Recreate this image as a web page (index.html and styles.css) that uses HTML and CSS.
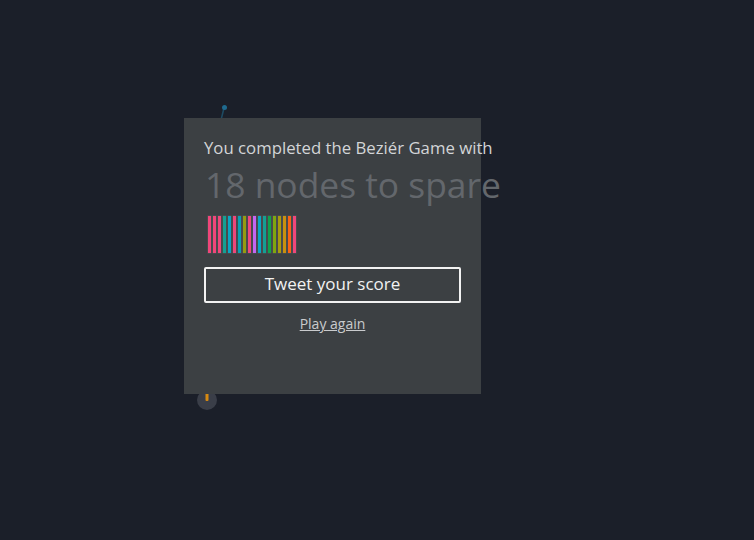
FILE: index.html
```html
<!DOCTYPE html>
<html>
<head>
<meta charset="utf-8">
<link rel="stylesheet" href="styles.css">
</head>
<body>
<div class="stage">
  <svg class="canvas" width="754" height="540" viewBox="0 0 754 540">
    <line x1="224" y1="108" x2="221" y2="120" stroke="#1d4a63" stroke-width="1.5"/>
    <circle cx="224.5" cy="107.5" r="2.5" fill="#1f6a8f"/>
    <circle cx="207" cy="400" r="10" fill="#3a3e48"/>
    <rect x="205.5" y="392" width="3" height="9" rx="1" fill="#d78a10"/>
  </svg>
  <div class="panel">
    <p class="intro">You completed the Beziér Game with</p>
    <p class="score">18 nodes to spare</p>
    <div class="bars">
      <span class="bar" style="background:#f0467a"></span>
      <span class="bar" style="background:#f0467a"></span>
      <span class="bar" style="background:#f0467a"></span>
      <span class="bar" style="background:#14a094"></span>
      <span class="bar" style="background:#0aa6c4"></span>
      <span class="bar" style="background:#f0467a"></span>
      <span class="bar" style="background:#0aa0b4"></span>
      <span class="bar" style="background:#949c10"></span>
      <span class="bar" style="background:#f0467a"></span>
      <span class="bar" style="background:#c465f2"></span>
      <span class="bar" style="background:#0aa6c4"></span>
      <span class="bar" style="background:#14a094"></span>
      <span class="bar" style="background:#10a24e"></span>
      <span class="bar" style="background:#80a60e"></span>
      <span class="bar" style="background:#a89a0e"></span>
      <span class="bar" style="background:#c8900e"></span>
      <span class="bar" style="background:#f86414"></span>
      <span class="bar" style="background:#f0467a"></span>
    </div>
    <button class="tweet">Tweet your score</button>
    <a class="again" href="#">Play again</a>
  </div>
</div>
</body>
</html>
```
FILE: styles.css
```css
html, body {
  margin: 0;
  padding: 0;
  background: #1b1f29;
  width: 754px;
  height: 540px;
  overflow: hidden;
}
.stage {
  position: relative;
  width: 754px;
  height: 540px;
  padding: 118px 0 0 184px;
  box-sizing: border-box;
  font-family: "Open Sans", "Noto Sans", sans-serif;
}
.canvas {
  position: absolute;
  left: 0;
  top: 0;
}
.panel {
  position: relative;
  width: 297px;
  height: 276px;
  box-sizing: border-box;
  background: #3c4043;
  padding: 18px 20px 0 20px;
  display: flex;
  flex-direction: column;
  align-items: flex-start;
}
.intro {
  margin: 0;
  font-size: 16.75px;
  line-height: 24px;
  color: #d3d5d7;
  white-space: nowrap;
}
.score {
  margin: 2px 0 0 1px;
  font-size: 35.4px;
  line-height: 44px;
  color: #63676c;
  white-space: nowrap;
}
.bars {
  display: flex;
  gap: 2px;
  margin: 10px 0 0 4px;
  height: 37px;
}
.bar {
  width: 3px;
  height: 37px;
  display: block;
  box-shadow: 0 0 0 0.5px rgba(255,255,255,0.12);
}
.tweet {
  margin-top: 14px;
  width: 257px;
  height: 36px;
  background: transparent;
  border: 2px solid #f2f2f2;
  border-radius: 2px;
  color: #f2f2f2;
  font-family: "Open Sans", "Noto Sans", sans-serif;
  font-size: 17px;
  padding: 0 0 3px 0;
  cursor: pointer;
}
.again {
  align-self: stretch;
  text-align: center;
  margin-top: 11px;
  font-size: 14px;
  color: #c9cbcd;
  text-decoration: underline;
}
```
